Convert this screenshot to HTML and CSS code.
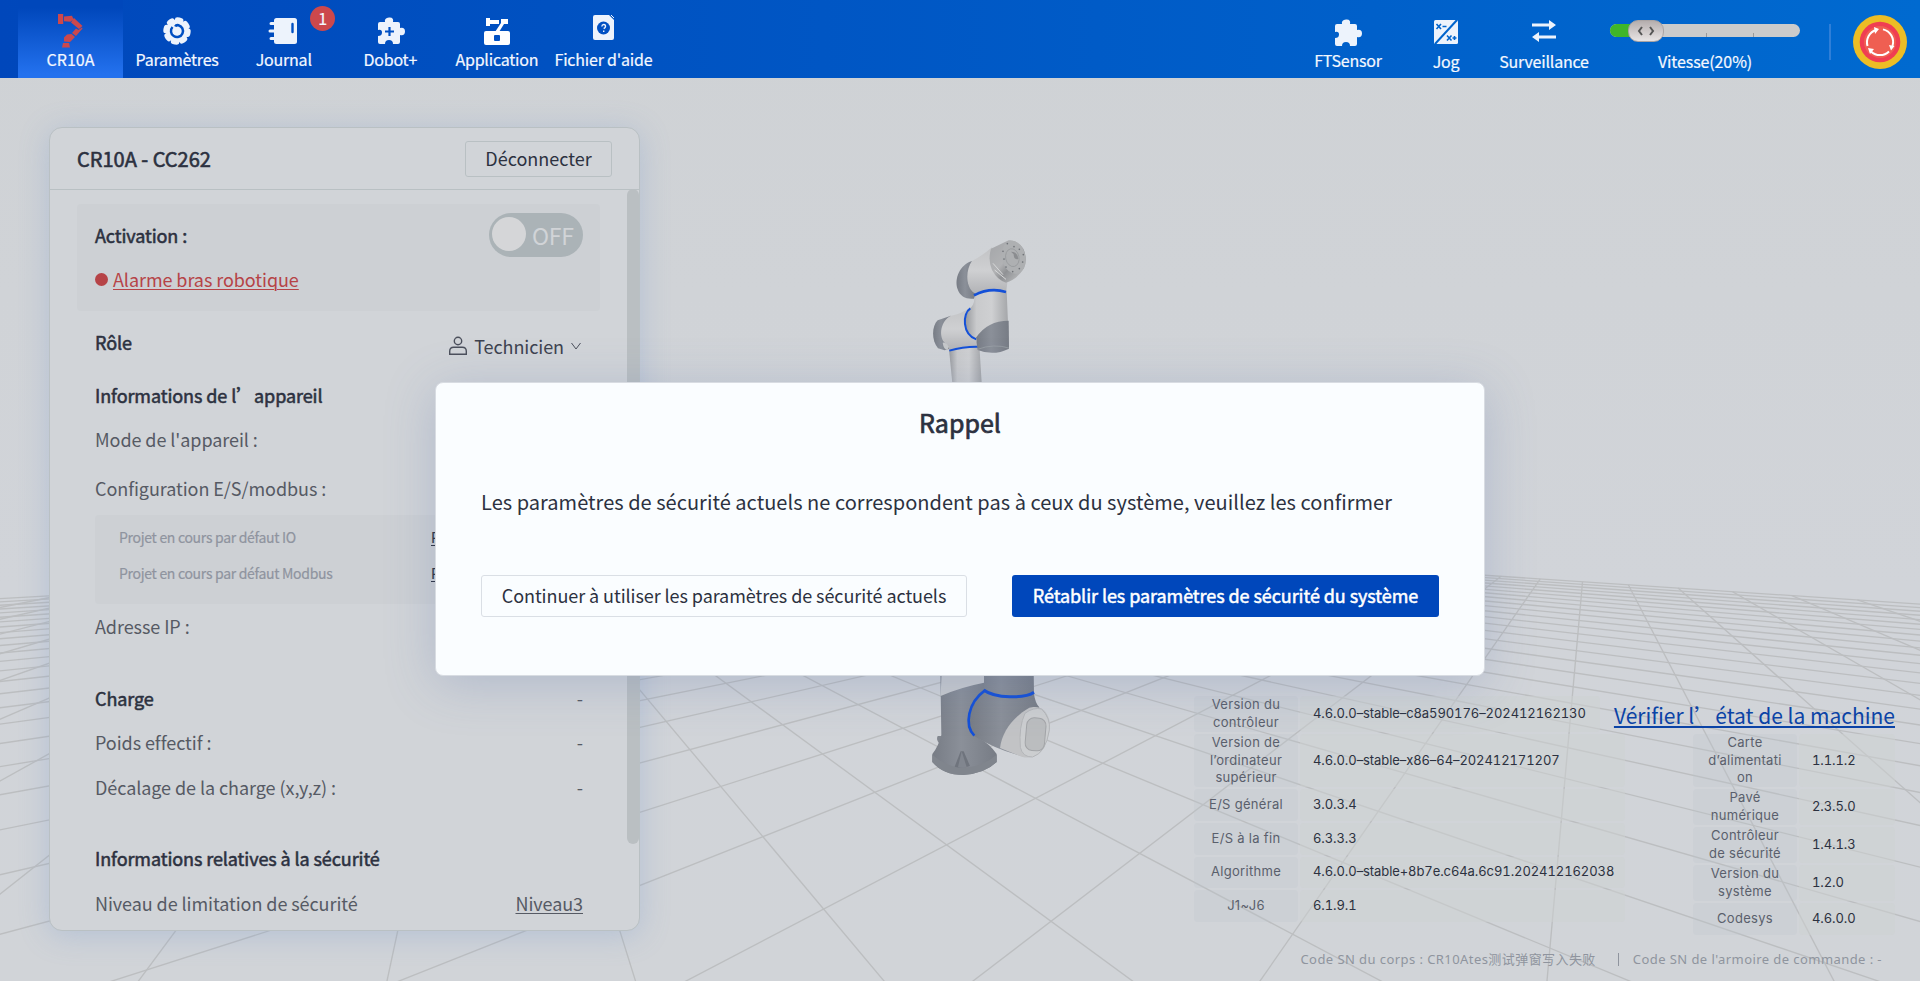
FILE: index.html
```html
<!DOCTYPE html>
<html lang="fr">
<head>
<meta charset="utf-8">
<title>CR10A</title>
<link rel="stylesheet" href="styles.css">
</head>
<body>
<svg class="scene" width="1920" height="981" viewBox="0 0 1920 981">
  <defs>
    <linearGradient id="tube" x1="0" x2="1" y1="0" y2="0"><stop offset="0" stop-color="#999b9f"/><stop offset=".25" stop-color="#c9cacc"/><stop offset=".6" stop-color="#cfd0d2"/><stop offset="1" stop-color="#a2a4a7"/></linearGradient>
    <linearGradient id="shell" x1="0" x2="0" y1="0" y2="1"><stop offset="0" stop-color="#c2c3c5"/><stop offset=".5" stop-color="#cfd0d2"/><stop offset="1" stop-color="#b2b3b6"/></linearGradient>
    <linearGradient id="cap" x1="0" x2="1" y1="0" y2="0"><stop offset="0" stop-color="#777c85"/><stop offset=".45" stop-color="#8b9099"/><stop offset="1" stop-color="#777c85"/></linearGradient>
    <linearGradient id="metal" x1="0" x2="1" y1="0" y2="1"><stop offset="0" stop-color="#a3a5a8"/><stop offset=".45" stop-color="#b1b2b4"/><stop offset=".6" stop-color="#8f9194"/><stop offset="1" stop-color="#cccdce"/></linearGradient>
  </defs>
  <g id="floor" class="floor"></g>
  <g transform="translate(900 220) scale(.33333)">
    <path d="M147 388 L160 520 L247 520 L238 376Z" fill="url(#tube)"/>
    <path d="M153 287 L113 301 C95 318 94 362 114 385 L134 391 L150 386Z" fill="url(#cap)"/>
    <path d="M153 287 Q185 282 212 262 L240 290 L240 378 Q190 378 148 391 Q146 378 132 366 C116 346 122 302 153 287Z" fill="url(#shell)"/>
    <path d="M128 368 q10 -2 18 12 l-3 10 q-12 0 -15 -22Z" fill="#c6c8ca"/>
    <path d="M148 392 Q190 379 236 380" fill="none" stroke="#1450d8" stroke-width="6"/>
    <path d="M223 222 Q270 204 320 214 L327 380 Q280 400 236 385 L228 358 C190 345 190 280 212 264 Q226 250 223 222Z" fill="url(#tube)"/>
    <path d="M211 265 C187 280 186 343 229 358" fill="none" stroke="#1450d8" stroke-width="6"/>
    <path d="M229 352 Q262 302 326 302 L327 386 Q280 409 233 390 Q229 370 229 352Z" fill="url(#cap)"/>
    <path d="M233 388 Q280 370 327 384" fill="none" stroke="#a0a4aa" stroke-width="2"/>
    <path d="M216 123 C180 134 162 175 173 208 C180 230 200 239 222 236 L226 220 L205 190Z" fill="url(#cap)"/>
    <path d="M216 123 Q250 105 276 82 L322 188 L319 212 Q270 203 224 220 C195 202 197 148 216 123Z" fill="url(#shell)"/>
    <path d="M222 226 Q270 201 318 216" fill="none" stroke="#1450d8" stroke-width="8"/>
    <path d="M273 86 L326 61 Q350 58 370 86 Q384 118 372 145 Q350 180 318 188 Q292 180 276 150 Q263 120 273 86Z" fill="url(#metal)"/>
    <ellipse cx="341" cy="112" rx="35" ry="50" transform="rotate(-12 341 112)" fill="#aeb0b2"/>
    <ellipse cx="337" cy="113" rx="20" ry="27" transform="rotate(-12 337 113)" fill="none" stroke="#939598" stroke-width="2"/>
    <path d="M333 95 q20 0 22 22 q-14 4 -14 -14Z" fill="#8b8d90"/>
    <g fill="#6f7277"><circle cx="322" cy="71" r="2.5"/><circle cx="342" cy="80" r="2.5"/><circle cx="358" cy="88" r="2.5"/><circle cx="370" cy="104" r="2.5"/><circle cx="368" cy="126" r="2.5"/><circle cx="358" cy="146" r="2.5"/><circle cx="338" cy="155" r="2.5"/><circle cx="318" cy="141" r="2.5"/><circle cx="312" cy="117" r="2.5"/><circle cx="309" cy="94" r="2.5"/></g>
    <path d="M284 150 l34 28 M279 130 l30 34" stroke="#d7d8d9" stroke-width="3"/>
  </g>
  <g transform="translate(900 660) scale(.33333)">
    <path d="M113 228 h16 v24 l-13 -4 q-8 -10 -3 -20Z" fill="#82878f"/>
    <path d="M121 30 L124 225 Q116 258 97 282 L97 306 Q130 345 190 345 Q255 340 290 306 L290 282 Q268 250 240 236 L252 200 L252 30Z" fill="url(#cap)"/>
    <path d="M97 284 Q140 322 190 323 Q250 320 290 284 L290 306 Q255 340 190 345 Q130 345 97 306Z" fill="#80858d"/>
    <path d="M182 274 L164 320 Q187 326 210 318 L191 274Z" fill="#6f747d"/>
    <path d="M185 274 l-11 47 q15 4 26 0Z" fill="#81868f"/>
    <path d="M125 30 L252 30 L252 68 Q180 82 122 108Z" fill="#c9cbce"/>
    <path d="M252 30 H401 L402 102 Q406 130 418 142 L372 290 Q290 270 222 228 C202 212 200 130 252 92Z" fill="url(#cap)"/>
    <path d="M254 92 C204 128 192 196 223 227" fill="none" stroke="#1450d8" stroke-width="8"/>
    <path d="M251 90 C285 116 375 116 402 97" fill="none" stroke="#1450d8" stroke-width="9"/>
    <path d="M388 143 C340 170 306 215 300 264 L365 290 Q400 300 426 272 Q455 225 448 180 Q436 138 400 141Z" fill="#c2c3c5"/>
    <path d="M375 160 Q400 141 425 147 Q452 175 448 210 Q438 278 398 291 Q368 292 361 262 Q356 200 375 160Z" fill="#ccced0" stroke="#b4b6b9" stroke-width="3"/>
    <rect x="378" y="174" width="58" height="98" rx="22" transform="rotate(5 407 220)" fill="#bbbdbf" stroke="#a3a5a8" stroke-width="3"/>
  </g>
</svg>

<header class="topbar">
  <nav class="tabs">
    <a class="tab active"><svg class="ico" viewBox="0 0 32 44" width="32" height="44"><g fill="#cc484c"><path d="M3 8h5.200v10H3zM9 10.500l8-.800 1.500 3.500-3 2.500-6.500-.500zM19 12l8.500 8-3.500 3-8-6.500zM23.500 24l3.500-2.500.500 1-6.500 7.500-4-3 4-4.500zM16.500 28l3.500 3-5 5-6-.500v-4l3-3z"/><path d="M8 37h6l1 4.500H7z"/></g></svg><span>CR10A</span></a>
    <a class="tab"><svg class="ico" viewBox="0 0 32 44" width="32" height="44"><g fill="#edf3fc"><circle cx="16" cy="25" r="11.2"/><circle cx="16" cy="25" r="11.2" fill="none" stroke="#edf3fc" stroke-width="5" stroke-linecap="round" stroke-dasharray="3.6 5.2"/></g><path d="M11.500 21a6 6 0 1 0 6-1.800q-2.500-.400-3.300 1.300" fill="none" stroke="#004fc2" stroke-width="2.500"/></svg><span>Paramètres</span></a>
    <a class="tab"><svg class="ico" viewBox="0 0 32 44" width="32" height="44"><rect x="6" y="12" width="23" height="26" rx="2.5" fill="#edf3fc"/><path d="M3 17.500h6M2 25h7M3 32.500h6" stroke="#edf3fc" stroke-width="3" stroke-linecap="round"/><path d="M24.500 18v8" stroke="#004fc2" stroke-width="2.400" stroke-linecap="round"/></svg><span>Journal</span><b class="badge">1</b></a>
    <a class="tab"><svg class="ico" viewBox="0 0 32 44" width="32" height="44"><path d="M4 18q0-2 2-2h5q-1-4 4-4.500t4 4.500h5q2 0 2 2v4q5-1 5 3.500t-5 3.500v7q0 2-2 2h-5q0-4-4-4t-4 4H6q-2 0-2-2v-6q4 0 4-3.500T4 24z" fill="#edf3fc"/><path d="M11 25.500h9M15.500 21v9" stroke="#0050c3" stroke-width="2.200"/></svg><span>Dobot+</span></a>
    <a class="tab"><svg class="ico" viewBox="0 0 32 44" width="32" height="44"><path d="M5 12h4v2h9v4H9v2H5zM20 13h7v5h-4l-5 8h-4l6-9z" fill="#fff"/><rect x="3" y="25" width="26" height="14" rx="2" fill="#fff"/><rect x="13" y="29" width="6" height="6" rx="1" fill="#0050c3"/></svg><span>Application</span></a>
    <a class="tab"><svg class="ico" viewBox="0 0 32 44" width="32" height="44"><path d="M6 11q0-2 2-2h14l5 5v18q0 2-2 2H8q-2 0-2-2z" fill="#edf3fc"/><path d="M24 9l3 3" stroke="#edf3fc"/><circle cx="16.500" cy="22" r="6.500" fill="#0050c3"/><path d="M14.800 20.500q.2-2 2-2t1.700 2q0 1-1.800 2.200M16.700 24.500v1.500" fill="none" stroke="#edf3fc" stroke-width="1.400"/></svg><span>Fichier d'aide</span></a>
  </nav>
  <div class="tools">
    <a class="tool ft"><svg viewBox="0 0 32 32" width="32" height="32"><path d="M4 9q0-2 2-2h5q-1-4 4-4.500t4 4.500h5q2 0 2 2v4q5-1 5 3.500t-5 3.500v7q0 2-2 2h-5q0-4-4-4t-4 4H6q-2 0-2-2v-6q4 0 4-3.500T4 15z" fill="#edf3fc"/></svg><span>FTSensor</span></a>
    <a class="tool jog"><svg viewBox="0 0 26 26" width="26" height="26"><rect x="1" y="1" width="24" height="24" rx="1.500" fill="#edf3fc"/><path d="M2 25L24 1" stroke="#0064cc" stroke-width="2"/><path d="M3.500 5l4.500 5m0-5l-4.500 5M9.500 7.500h4M14 16.500l4.500 5m0-5l-4.500 5M19.500 19h4M21.500 17v4" stroke="#0064cc" stroke-width="1.600"/></svg><span>Jog</span></a>
    <a class="tool surv"><svg viewBox="0 0 26 26" width="26" height="26"><path d="M1 7h19M6 19h19" stroke="#edf3fc" stroke-width="3"/><path d="M18 2l7 5-7 5zM8 14l-7 5 7 5z" fill="#edf3fc"/></svg><span>Surveillance</span></a>
    <div class="speed"><div class="track"><i class="fill"></i><i class="tick t1"></i><i class="tick t2"></i><i class="thumb"><svg viewBox="0 0 18 10" width="18" height="10"><path d="M5 1L2 5l3 4M13 1l3 4-3 4" fill="none" stroke="#555" stroke-width="2"/></svg></i></div><span>Vitesse(20%)</span></div>
    <i class="split"></i>
    <svg class="estop" viewBox="0 0 54 54" width="54" height="54"><circle cx="27" cy="27" r="27" fill="#ecbd25"/><circle cx="27" cy="27" r="20.300" fill="#f03e52"/><circle cx="27" cy="27" r="16" fill="#ef5f52"/><g fill="none" stroke="#fff" stroke-width="2"><path d="M14.500 31A13 13 0 0 1 23 15M30 14.400A13 13 0 0 1 39.500 31M36 36.500A13 13 0 0 1 18 36.500"/></g><path d="M21 12l5 2-4 5zM36 30l5.500 1-3.500 4.500zM15 33l6 1-4 5z" fill="#fff"/></svg>
  </div>
</header>

<main class="stage">
  <section class="panel">
    <div class="panel-head"><h2>CR10A - CC262</h2><button class="btn-off">Déconnecter</button></div>
    <div class="panel-body">
      <div class="activation">
        <div class="act-row"><b>Activation :</b><span class="toggle"><i></i>OFF</span></div>
        <div class="alarm"><i></i><a>Alarme bras robotique</a></div>
      </div>
      <div class="rows">
        <div class="row r-role"><b>Rôle</b><span class="role"><svg viewBox="0 0 20 20" width="20" height="20"><g fill="none" stroke="#4c505c" stroke-width="1.400"><circle cx="10" cy="5" r="3.700"/><path d="M1.700 18.300v-3q0-4 4-4h8.600q4 0 4 4v3z"/></g></svg>Technicien<svg class="chev" viewBox="0 0 12 8" width="12" height="8"><path d="M1.500 1L6 7l4.500-6" fill="none" stroke="#4c505c"/></svg></span></div>
        <div class="row r-info"><b>Informations de l’appareil</b></div>
        <div class="row r-mode"><span>Mode de l'appareil :</span></div>
        <div class="row r-conf"><span>Configuration E/S/modbus :</span></div>
        <div class="projects"><div><span>Projet en cours par défaut IO</span><a>Projet par défaut</a></div><div><span>Projet en cours par défaut Modbus</span><a>Projet par défaut</a></div></div>
        <div class="row r-ip"><span>Adresse IP :</span></div>
        <div class="row r-load"><b>Charge</b><span>-</span></div>
        <div class="row r-weight"><span>Poids effectif :</span><span>-</span></div>
        <div class="row r-offset"><span>Décalage de la charge (x,y,z) :</span><span>-</span></div>
        <div class="row r-safe"><b>Informations relatives à la sécurité</b></div>
        <div class="row r-level"><span>Niveau de limitation de sécurité</span><a>Niveau3</a></div>
      </div>
      <i class="scrollbar"></i>
    </div>
  </section>

  <section class="status">
    <div class="tables">
      <div class="vtable wide">
        <div class="v h1"><span>Version du contrôleur</span><em class="short">4.6.0.0–stable–c8a590176–202412162130</em></div>
        <div class="v h2"><span>Version de l’ordinateur supérieur</span><em>4.6.0.0–stable–x86–64–202412171207</em></div>
        <div class="v h3"><span>E/S général</span><em>3.0.3.4</em></div>
        <div class="v h4"><span>E/S à la fin</span><em>6.3.3.3</em></div>
        <div class="v h4"><span>Algorithme</span><em>4.6.0.0–stable+8b7e.c64a.6c91.202412162038</em></div>
        <div class="v h4"><span>J1~J6</span><em>6.1.9.1</em></div>
      </div>
      <div class="right">
        <a class="verify">Vérifier l’état de la machine</a>
        <div class="vtable narrow">
          <div class="v h2"><span>Carte d’alimentati<br>on</span><em>1.1.1.2</em></div>
          <div class="v h1"><span>Pavé numérique</span><em>2.3.5.0</em></div>
          <div class="v h1"><span>Contrôleur de sécurité</span><em>1.4.1.3</em></div>
          <div class="v h1"><span>Version du système</span><em>1.2.0</em></div>
          <div class="v h4"><span>Codesys</span><em>4.6.0.0</em></div>
        </div>
      </div>
    </div>
    <footer class="serials"><span class="s1">Code SN du corps : CR10Ates测试弹窗写入失败</span><i></i><span class="s2">Code SN de l'armoire de commande : -</span></footer>
  </section>
</main>

<div class="modal">
  <h1>Rappel</h1>
  <p>Les paramètres de sécurité actuels ne correspondent pas à ceux du système, veuillez les confirmer</p>
  <div class="actions"><button class="plain">Continuer à utiliser les paramètres de sécurité actuels</button><button class="primary">Rétablir les paramètres de sécurité du système</button></div>
</div>
<script src="floor.js"></script>
</body>
</html>
```
FILE: styles.css
```css
* { box-sizing: border-box; }
body { margin: 0; width: 1920px; height: 981px; overflow: hidden; position: relative; background: linear-gradient(#cfd2d5, #d1d4d9 60%, #d1d4d8); color: #2c3140; font-family: "Noto Sans CJK SC", "Noto Sans", sans-serif; }
button, h1, h2, p { margin: 0; font: inherit; }
.scene { position: absolute; left: 0; top: 0; z-index: -1; }
.floor { stroke: #bcbec0; stroke-width: 1.35; }

.topbar { height: 78px; display: flex; justify-content: space-between; background: linear-gradient(90deg, #0047bb, #006ad0); color: #f4f8ff; font-size: 16px; line-height: 22px; letter-spacing: -.2px; -webkit-text-stroke: .2px #f4f8ff; }
.tabs { display: flex; padding-left: 18px; }
.tab { position: relative; width: 105px; margin-right: 1.6px; padding-top: 6px; display: flex; flex-direction: column; align-items: center; white-space: nowrap; }
.tab span { margin-top: -2px; }
.tab.active { background: linear-gradient(#0047bb 10%, #2371ee 95%); letter-spacing: 0; }
.badge { position: absolute; left: 79px; top: 6px; width: 25px; height: 25px; border-radius: 50%; background: #cc484c; font-size: 16px; line-height: 25px; text-align: center; }
.tools { display: flex; align-items: flex-start; padding-right: 13px; }
.tool { display: flex; flex-direction: column; align-items: center; white-space: nowrap; }
.ft { width: 98px; padding-top: 17px; }
.ft svg { margin-left: -2px; }
.jog { width: 98px; padding-top: 19px; }
.jog span { margin-top: 5px; }
.surv { width: 98px; padding-top: 18px; }
.surv span { margin-top: 6px; }
.speed { width: 190px; margin-left: 17px; padding-top: 24px; text-align: center; letter-spacing: -.1px; }
.speed span { display: block; margin-top: 13px; }
.track { position: relative; height: 13px; border-radius: 7px; background: #cbcbcb; }
.fill { position: absolute; left: 0; top: 0; width: 30px; height: 13px; border-radius: 7px 0 0 7px; background: #3fb629; }
.tick { position: absolute; bottom: 0; width: 1px; height: 4px; background: #9a9a9a; }
.t1 { left: 96px; }
.t2 { left: 143px; }
.thumb { position: absolute; left: 18px; top: -4px; width: 36px; height: 22px; border-radius: 10px; border: 1px solid #aaa4a4; background: linear-gradient(#b5aeae, #e8e4e4); display: flex; align-items: center; justify-content: center; }
.split { width: 2px; height: 36px; margin: 24px 22px 0 29px; background: #2f7fd8; }
.estop { margin-top: 15px; }

.stage { display: flex; justify-content: space-between; padding: 49px 25px 0 49px; height: 903px; }
.panel { width: 591px; height: 804px; border: 1px solid #b9c0c3; border-radius: 13px; background: #d1d4d8; overflow: hidden; box-shadow: 0 4px 30px rgba(100, 140, 205, .27); }
.panel-head { height: 62px; display: flex; justify-content: space-between; align-items: center; padding: 1px 27px 0; border-bottom: 1px solid #b9c0c3; }
h2 { font-size: 20px; line-height: 28px; -webkit-text-stroke: .6px #2c3140; }
.btn-off { width: 147px; height: 36px; border: 1px solid #b9c0c3; border-radius: 3px; background: transparent; color: #2c3140; font-size: 18px; line-height: 30px; padding: 0 0 2px; }
.panel-body { position: relative; padding: 14px 39px 0 27px; font-size: 18px; line-height: 26px; letter-spacing: -.07px; height: 741px; }
b { font-weight: 400; }
.act-row b, .row b { -webkit-text-stroke: .55px #2c3140; letter-spacing: -.09px; }
.activation { height: 107px; border-radius: 4px; background: #cdd0d4; padding: 9px 17px 0 18px; }
.act-row { display: flex; justify-content: space-between; align-items: center; height: 44px; }
.toggle { position: relative; width: 94px; height: 44px; border-radius: 22px; background: #abb3b7; color: #d1d4d7; font-size: 23px; line-height: 45px; letter-spacing: -.3px; padding-left: 43px; }
.toggle i { position: absolute; left: 3px; top: 4px; width: 34px; height: 34px; border-radius: 50%; background: #d5d6d8; }
.alarm { display: flex; align-items: center; gap: 5px; margin-top: 9px; color: #b64347; }
.alarm i { width: 13px; height: 13px; border-radius: 50%; background: #b64347; }
a { text-underline-offset: 2px; }
.alarm a, .r-level a, .projects a { text-decoration: underline; text-decoration-thickness: 1px; }
.rows { padding: 0 17px 0 18px; }
.row { display: flex; justify-content: space-between; height: 26px; color: #565a64; white-space: nowrap; }
.row b { color: #2c3140; }
.r-role { margin-top: 18px; }
.role { display: flex; align-items: center; color: #3d424f; padding-top: 8px; }
.role svg { margin-right: 6px; }
.role .chev { margin: 0 1px 0 6px; }
.r-info { margin-top: 27px; }
.r-mode { margin-top: 18px; }
.r-conf { margin-top: 23px; }
.projects { height: 89px; margin-top: 14px; padding: 12px 24px 0; background: #cdd0d4; border-radius: 4px; font-size: 14px; line-height: 20px; letter-spacing: -.3px; color: #8f949f; -webkit-text-stroke: .2px; }
.projects div { display: flex; justify-content: space-between; height: 36px; white-space: nowrap; }
.projects a { width: 128px; overflow: hidden; color: #2c3140; }
.r-ip { margin-top: 9px; }
.r-load { margin-top: 46px; }
.r-weight { margin-top: 18px; }
.r-offset { margin-top: 19px; }
.r-safe { margin-top: 45px; }
.r-level { margin-top: 19px; }
.scrollbar { position: absolute; right: 0; top: -1px; width: 12px; height: 655px; border-radius: 6px; background: #babfc2; }

.status { width: 701px; margin-top: 569px; font-family: Inter, "Noto Sans CJK SC", sans-serif; }
.tables { display: flex; justify-content: space-between; height: 247px; }
.vtable { display: flex; flex-direction: column; gap: 2px; font-size: 13px; line-height: 17.6px; }
.v { display: flex; gap: 2px; }
.v span { width: 104px; display: flex; align-items: center; justify-content: center; text-align: center; padding: 0 13px; background: rgba(192, 196, 204, .28); border-radius: 4px; color: #5a5f6c; letter-spacing: .3px; }
.v em { flex: 1; display: flex; align-items: center; padding-left: 13px; font-style: normal; font-variant-numeric: tabular-nums; letter-spacing: -.08px; color: #2c3140; background: rgba(205, 209, 210, .5); border-radius: 4px; white-space: nowrap; }
.v em.short { flex: 0 0 300px; }
.wide { width: 431px; }
.narrow { width: 202px; }
.h1 { height: 36px; }
.h2 { height: 53px; }
.h3 { height: 32px; }
.h4 { height: 31.5px; }
.right { display: flex; flex-direction: column; align-items: flex-end; width: 282px; margin-left: -60px; }
.verify { height: 38px; white-space: nowrap; font: 21px/38px "Noto Sans CJK SC", sans-serif; color: #0b43a6; text-decoration: underline; text-decoration-thickness: 2px; }
.serials { display: flex; align-items: center; justify-content: flex-end; padding: 5px 13px 0 0; font: 13px/22px "Noto Sans", "Noto Sans CJK SC", sans-serif; letter-spacing: .43px; color: #8f949e; white-space: nowrap; }
.serials i { width: 1px; height: 13px; margin: 0 14px 0 22px; background: #8f949e; }

.modal { position: absolute; left: 435px; top: 382px; width: 1050px; height: 294px; border: 1px solid #d8dce2; border-radius: 8px; background: #fafdff; box-shadow: 0 8px 50px rgba(90, 115, 170, .27); padding: 22px 45px 0; }
h1 { text-align: center; font-size: 25px; line-height: 34px; -webkit-text-stroke: .7px #2c3140; }
.modal p { margin-top: 48px; font-size: 20px; line-height: 30px; letter-spacing: .03px; white-space: nowrap; }
.actions { display: flex; justify-content: space-between; margin-top: 58px; }
.actions button { height: 42px; border-radius: 3px; font-size: 18px; line-height: 26px; letter-spacing: -.07px; white-space: nowrap; padding: 0 0 2px; }
.plain { width: 486px; border: 1px solid #dadfe5; background: transparent; color: #2c3140; }
.primary { width: 427px; border: 0; background: #0047bb; color: #fff; -webkit-text-stroke: .5px #fff; }
```
FILE: floor.js
```js
// Perspective floor: two families of lines that vanish on a level horizon.
const horizon = 509, depth = 480;
const vanishA = 488, vanishB = 1589, span = vanishB - vanishA;
const slopeA = i => 0.839 + 0.5265 * i;
const slopeB = j => 1.913 - 0.608 * j;
const lastA = 27, lastB = -26;
const floor = document.getElementById('floor');

function addLine(x, dir, start) {
  const line = document.createElementNS('http://www.w3.org/2000/svg', 'line');
  line.setAttribute('x1', x + dir * start);
  line.setAttribute('y1', horizon + start);
  line.setAttribute('x2', x + dir * depth);
  line.setAttribute('y2', horizon + depth);
  floor.appendChild(line);
}
for (let i = -27; i <= lastA; i++) {
  addLine(vanishA, slopeA(i), span / (slopeB(lastB) + slopeA(i)));
}
for (let j = lastB; j <= 26; j++) {
  addLine(vanishB, -slopeB(j), span / (slopeA(lastA) + slopeB(j)));
}
```
